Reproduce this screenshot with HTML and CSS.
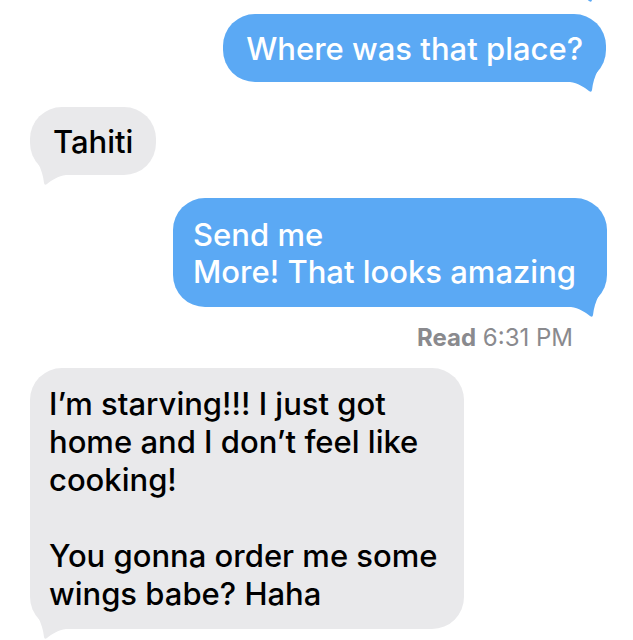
FILE: index.html
```html
<!DOCTYPE html>
<html lang="en">
<head>
    <meta charset="UTF-8">
    <meta name="viewport" content="width=device-width, initial-scale=1.0">
    <title>Messages</title>
    <link rel="stylesheet" href="styles.css">
</head>
<body>

<div class="thread">
    <!-- previous bubble, only its tail shows at the top -->
    <div class="bubble sent offscreen">
        <svg class="tail" width="40" height="24" viewBox="0 0 40 24"><path d="M4 12 C12 13 18 17 23 21 Q25.5 23 26 20 Q27 10 32 0 L4 0 Z"/></svg>
    </div>

    <div class="bubble sent first">
        Where was that place?
        <svg class="tail" width="40" height="24" viewBox="0 0 40 24"><path d="M4 12 C12 13 18 17 23 21 Q25.5 23 26 20 Q27 10 32 0 L4 0 Z"/></svg>
    </div>

    <div class="bubble received">
        Tahiti
        <svg class="tail" width="40" height="24" viewBox="0 0 40 24"><path d="M36 12 C28 13 22 17 17 21 Q14.5 23 14 20 Q13 10 8 0 L36 0 Z"/></svg>
    </div>

    <div class="bubble sent two-line">
        Send me<br>More! That looks amazing
        <svg class="tail" width="40" height="24" viewBox="0 0 40 24"><path d="M4 12 C12 13 18 17 23 21 Q25.5 23 26 20 Q27 10 32 0 L4 0 Z"/></svg>
    </div>

    <div class="status"><b>Read</b> 6:31 PM</div>

    <div class="bubble received long">
        I’m starving!!! I just got<br>home and I don’t feel like<br>cooking!<br><br>You gonna order me some<br>wings babe? Haha
        <svg class="tail" width="40" height="24" viewBox="0 0 40 24"><path d="M36 12 C28 13 22 17 17 21 Q14.5 23 14 20 Q13 10 8 0 L36 0 Z"/></svg>
    </div>
</div>

</body>
</html>
```

FILE: styles.css
```css
body {
    margin: 0;
    background: #fff;
    font-family: Inter, "Noto Sans", sans-serif;
    overflow: hidden;
}

.thread {
    display: flex;
    flex-direction: column;
    height: 640px;
}

.bubble {
    position: relative;
    font-size: 31px;
    line-height: 37px;
    padding: 16px 23px 15px;
    border-radius: 32px;
    max-width: 480px;
}

.bubble .tail {
    position: absolute;
    bottom: -12px;
}

.sent {
    align-self: flex-end;
    margin-right: 27px;
    background: #5ba9f4;
    color: #fff;
    font-weight: 500;
    margin-top: 23px;
}

.sent .tail {
    right: 0;
    fill: #5ba9f4;
}

.received {
    align-self: flex-start;
    margin-left: 30px;
    background: #e9e9eb;
    color: #000;
    font-weight: 500;
    margin-top: 25px;
}

.received .tail {
    left: 0;
    fill: #e9e9eb;
}

.offscreen {
    height: 68px;
    width: 200px;
    padding: 0;
    margin-top: -76px;
}

.first {
    margin-top: 22px;
}

.two-line {
    padding: 18px 31px 17px 20px;
    margin-right: 26px;
}

.status {
    align-self: flex-end;
    margin: 20px 60px 0 0;
    font-size: 24px;
    line-height: 22px;
    color: #8a8a8e;
}

.status b {
    font-weight: 700;
}

.long {
    margin-top: 19px;
    line-height: 38px;
    padding: 17px 26px 16px 19px;
}
```
